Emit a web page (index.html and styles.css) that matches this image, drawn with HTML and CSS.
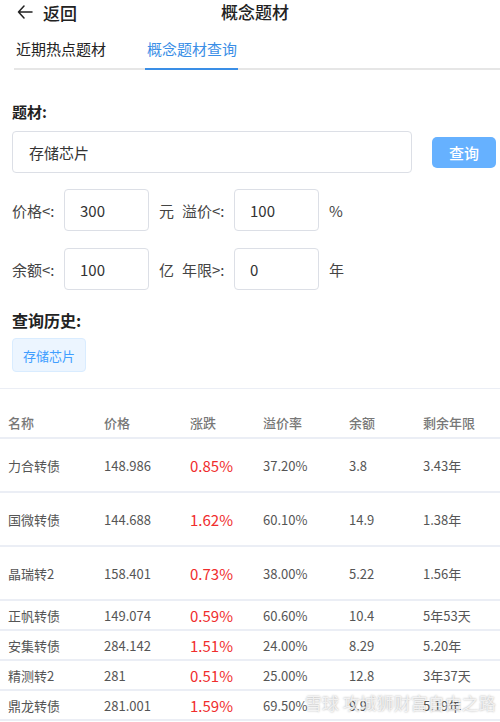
FILE: index.html
```html
<!DOCTYPE html>
<html lang="zh">
<head>
<meta charset="utf-8">
<link rel="stylesheet" href="styles.css">
</head>
<body>
<div class="page">
  <header class="topbar">
    <div class="back">
      <svg class="back-icon" width="16" height="14" viewBox="0 0 16 14"><path d="M7 1 L1.5 7 L7 13 M1.5 7 H15" fill="none" stroke="#222" stroke-width="1.5" stroke-linecap="round" stroke-linejoin="round"/></svg>
      <span>返回</span>
    </div>
    <div class="title">概念题材</div>
  </header>
  <nav class="tabs">
    <div class="tab">近期热点题材</div>
    <div class="tab active">概念题材查询</div>
  </nav>

  <section class="form">
    <div class="label-strong">题材:</div>
    <div class="search-row">
      <div class="input big">存储芯片</div>
      <div class="btn">查询</div>
    </div>
    <div class="param-row">
      <span class="plabel">价格&lt;:</span>
      <div class="input small">300</div>
      <span class="unit">元</span>
      <span class="plabel">溢价&lt;:</span>
      <div class="input small">100</div>
      <span class="unit">%</span>
    </div>
    <div class="param-row">
      <span class="plabel">余额&lt;:</span>
      <div class="input small">100</div>
      <span class="unit">亿</span>
      <span class="plabel">年限&gt;:</span>
      <div class="input small">0</div>
      <span class="unit">年</span>
    </div>
    <div class="label-strong history">查询历史:</div>
    <div class="tag">存储芯片</div>
  </section>

  <section class="table">
    <div class="row head">
      <span>名称</span><span>价格</span><span>涨跌</span><span>溢价率</span><span>余额</span><span>剩余年限</span>
    </div>
    <div class="row tall">
      <span>力合转债</span><span>148.986</span><span class="up">0.85%</span><span>37.20%</span><span>3.8</span><span>3.43年</span>
    </div>
    <div class="row tall">
      <span>国微转债</span><span>144.688</span><span class="up">1.62%</span><span>60.10%</span><span>14.9</span><span>1.38年</span>
    </div>
    <div class="row tall">
      <span>晶瑞转2</span><span>158.401</span><span class="up">0.73%</span><span>38.00%</span><span>5.22</span><span>1.56年</span>
    </div>
    <div class="row">
      <span>正帆转债</span><span>149.074</span><span class="up">0.59%</span><span>60.60%</span><span>10.4</span><span>5年53天</span>
    </div>
    <div class="row">
      <span>安集转债</span><span>284.142</span><span class="up">1.51%</span><span>24.00%</span><span>8.29</span><span>5.20年</span>
    </div>
    <div class="row">
      <span>精测转2</span><span>281</span><span class="up">0.51%</span><span>25.00%</span><span>12.8</span><span>3年37天</span>
    </div>
    <div class="row">
      <span>鼎龙转债</span><span>281.001</span><span class="up">1.59%</span><span>69.50%</span><span>9.9</span><span>5.19年</span>
    </div>
    <div class="watermark">雪球 攻城狮财富自由之路</div>
  </section>
</div>
</body>
</html>
```

FILE: styles.css
```css
* { box-sizing: border-box; }
html, body { margin: 0; padding: 0; background: #fff; }
body {
  font-family: "Noto Sans CJK SC", "Noto Sans", sans-serif;
  color: #333;
  width: 500px;
  overflow: hidden;
}
.page { width: 500px; }

.topbar {
  position: relative;
  height: 24px;
  display: flex;
  align-items: center;
}
.back {
  display: flex;
  align-items: center;
  gap: 10px;
  padding-left: 17px;
  font-size: 17px;
  font-weight: 500;
  color: #222;
}
.title {
  position: absolute;
  left: 0; right: 0; top: 0;
  text-align: center;
  font-size: 17px;
  font-weight: 500;
  color: #222;
  line-height: 23px;
  padding-left: 10px;
}

.tabs {
  margin: 12px 0 0 14px;
  display: flex;
  gap: 39px;
  border-bottom: 2px solid #e6e6e6;
  height: 34px;
}
.tab {
  padding-left: 2px;
  font-size: 15px;
  color: #222;
  line-height: 22px;
  height: 34px;
  padding-top: 2px;
}
.tab.active {
  color: #3a8ee6;
  border-bottom: 2px solid #3a8ee6;
  margin-bottom: -2px;
  height: 34px;
  padding-right: 1px;
}

.form { padding: 32px 0 0 12px; }
.label-strong {
  font-size: 15px;
  font-weight: 700;
  color: #222;
  line-height: 20px;
}
.search-row {
  display: flex;
  align-items: center;
  margin-top: 9px;
}
.input {
  border: 1px solid #dcdfe6;
  border-radius: 4px;
  display: flex;
  align-items: center;
  font-size: 15px;
  color: #333;
}
.input.big {
  width: 400px;
  height: 42px;
  padding-left: 16px;
  font-size: 15px;
}
.btn {
  margin-left: 20px;
  width: 64px;
  height: 31px;
  background: #66b1ff;
  border-radius: 5px;
  color: #fff;
  font-size: 15px;
  font-weight: 500;
  display: flex;
  align-items: center;
  justify-content: center;
}
.param-row {
  display: flex;
  align-items: center;
  margin-top: 16px;
  font-size: 15px;
  color: #444;
}
.param-row + .param-row { margin-top: 17px; }
.plabel { width: 52px; }
.unit { width: 33px; padding-left: 10px; }
.input.small {
  width: 85px;
  height: 42px;
  padding-left: 15px;
}
.history { margin-top: 20px; font-size: 16px; }
.tag {
  margin-top: 8px;
  width: 74px;
  height: 34px;
  border: 1px solid #d9ecff;
  background: #ecf5ff;
  color: #409eff;
  border-radius: 4px;
  font-size: 13px;
  display: flex;
  align-items: center;
  justify-content: center;
}

.table {
  position: relative;
  margin-top: 16px;
  border-top: 1px solid #ebeef5;
}
.row {
  display: grid;
  grid-template-columns: 96px 86px 73px 86px 74px 77px;
  padding-left: 8px;
  align-items: center;
  height: 30px;
  border-bottom: 2px solid #ebeef5;
  font-size: 13px;
  color: #555;
}
.row.head {
  margin-top: 19px;
  height: 31px;
  font-weight: 500;
  color: #777;
  padding-bottom: 1px;
}
.row.tall { height: 54px; }
.up { color: #f02d2d; font-size: 15px; }
.watermark {
  position: absolute;
  left: 305px;
  bottom: 6px;
  font-size: 17px;
  color: rgba(255,255,255,0.75);
  text-shadow: 0 0 2px rgba(0,0,0,0.35);
  white-space: nowrap;
}
```
